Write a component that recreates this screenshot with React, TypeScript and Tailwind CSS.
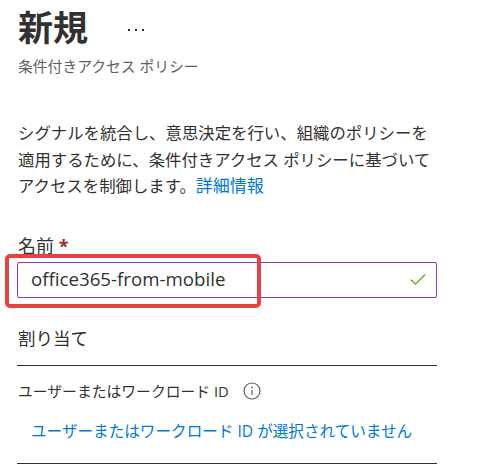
import { Check } from 'lucide-react';

const font = "font-['Open_Sans','Noto_Sans_CJK_JP',sans-serif]";

const App = () => {
  return (
    <div className={`w-[493px] h-[474px] bg-white overflow-hidden pl-[17px] text-[#323130] ${font}`}>
      <div className="w-[420px]">
        <div className="flex items-center mt-[8px] h-[40px]">
          <h1 className="text-[35px] leading-[40px] font-bold pl-[1px]">新規</h1>
          <div className="flex gap-[5px] ml-[40px] mt-[4px]">
            <span className="w-[2px] h-[2px] bg-[#323130]" />
            <span className="w-[2px] h-[2px] bg-[#323130]" />
            <span className="w-[2px] h-[2px] bg-[#323130]" />
          </div>
        </div>
        <div className="mt-[8px] pl-[1px] text-[14.8px] leading-[20px] text-[#605e5c]">条件付きアクセス ポリシー</div>

        <p className="mt-[44px] pl-[1px] text-[16.4px] leading-[26.5px]">
          シグナルを統合し、意思決定を行い、組織のポリシーを
          <br />
          適用するために、条件付きアクセス ポリシーに基づいて
          <br />
          アクセスを制御します。<a className="text-[#0078d4] text-[17px]">詳細情報</a>
        </p>

        <label className="block mt-[35px] pl-[1px] text-[18px] leading-[22px]">
          名前 <span className="text-[#a4262c] font-bold">*</span>
        </label>
        <div className="relative mt-[5px]">
          <div className="flex items-center h-[36px] border border-[#8a3ab9] rounded-[2px] pl-[13px] pr-[8px]">
            <span className="flex-1 text-[18.7px]">office365-from-mobile</span>
            <Check className="w-[20px] h-[20px] text-[#57a300]" strokeWidth={1.5} />
          </div>
          <div className="absolute left-[-12px] top-[-8px] w-[256px] h-[54px] border-[4px] border-[#e94141] rounded-[5px]" />
        </div>

        <div className="mt-[29px] pl-[1px] text-[17.5px] leading-[22px]">割り当て</div>
        <div className="mt-[16px] border-t border-[#323130]" />

        <div className="flex items-center mt-[14px] pl-[1px] text-[14.8px] leading-[22px]">
          <span>ユーザーまたはワークロード ID</span>
          <svg className="ml-[14px] w-[18px] h-[18px] text-[#605e5c]" viewBox="0 0 18 18" fill="none">
            <circle cx="9" cy="9" r="8" stroke="currentColor" strokeWidth="1.2" />
            <circle cx="9" cy="5.5" r="0.9" fill="currentColor" />
            <path d="M9 8v5" stroke="currentColor" strokeWidth="1.2" />
          </svg>
        </div>
        <div className="mt-[18px] pl-[14px] text-[15.6px] leading-[22px] text-[#0078d4]">
          ユーザーまたはワークロード ID が選択されていません
        </div>
        <div className="mt-[21px] border-t border-[#323130]" />
      </div>
    </div>
  );
};

export default App;
